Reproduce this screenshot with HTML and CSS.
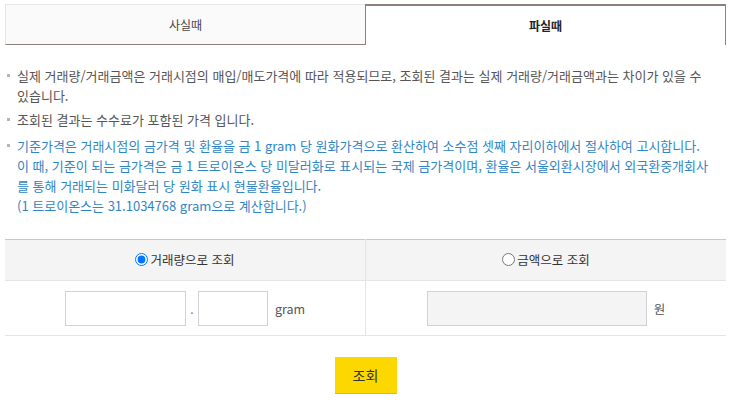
FILE: index.html
```html
<!DOCTYPE html>
<html lang="ko">
<head>
    <meta charset="UTF-8">
    <meta name="viewport" content="width=device-width, initial-scale=1.0">
    <title>골드 시세 조회</title>
    <link rel="stylesheet" href="styles.css">
</head>
<body>
    <div class="wrap">
        <ul class="tabs">
            <li class="tab">사실때</li>
            <li class="tab active">파실때</li>
        </ul>

        <ul class="notice">
            <li>실제 거래량/거래금액은 거래시점의 매입/매도가격에 따라 적용되므로, 조회된 결과는 실제 거래량/거래금액과는 차이가 있을 수 있습니다.</li>
            <li>조회된 결과는 수수료가 포함된 가격 입니다.</li>
            <li class="blue">기준가격은 거래시점의 금가격 및 환율을 금 1 gram 당 원화가격으로 환산하여 소수점 셋째 자리이하에서 절사하여 고시합니다.<br>이 때, 기준이 되는 금가격은 금 1 트로이온스 당 미달러화로 표시되는 국제 금가격이며, 환율은 서울외환시장에서 외국환중개회사를 통해 거래되는 미화달러 당 원화 표시 현물환율입니다.<br>(1 트로이온스는 31.1034768 gram으로 계산합니다.)</li>
        </ul>

        <table class="calc">
            <tr>
                <th><label><input type="radio" name="mode" checked>거래량으로 조회</label></th>
                <th><label><input type="radio" name="mode">금액으로 조회</label></th>
            </tr>
            <tr>
                <td>
                    <div class="field">
                        <input type="text" class="box int">
                        <span class="dot">.</span>
                        <input type="text" class="box dec">
                        <span class="unit">gram</span>
                    </div>
                </td>
                <td>
                    <div class="field">
                        <input type="text" class="box won" disabled>
                        <span class="unit">원</span>
                    </div>
                </td>
            </tr>
        </table>

        <div class="btn-area">
            <button class="btn-search">조회</button>
        </div>
    </div>
</body>
</html>
```

FILE: styles.css
```css
* {
    margin: 0;
    padding: 0;
    box-sizing: border-box;
}
body {
    font-family: "Noto Sans CJK KR", "Noto Sans", sans-serif;
    font-size: 12px;
    color: #555;
    background: #fff;
}
.wrap {
    margin: 4px 8px 0 5px;
}
.tabs {
    display: flex;
    list-style: none;
}
.tab {
    flex: 1;
    height: 41px;
    line-height: 39px;
    text-align: center;
    font-size: 12px;
    color: #444;
    background: #fafafa;
    border-top: 1px solid #e6e6e6;
    border-left: 1px solid #e6e6e6;
    border-bottom: 1px solid #8c8079;
}
.tab.active {
    color: #222;
    font-weight: bold;
    background: #fff;
    border-top: 2px solid #8c8079;
    border-left: 1px solid #8c8079;
    border-right: 1px solid #8c8079;
    border-bottom: none;
}
.notice {
    list-style: none;
    margin-top: 21px;
    padding-right: 14px;
    font-size: 13px;
    line-height: 20px;
}
.notice li {
    position: relative;
    padding-left: 12px;
    margin-bottom: 4px;
}
.notice li:before {
    content: "";
    position: absolute;
    left: 2px;
    top: 8px;
    width: 3px;
    height: 3px;
    background: #b5b5b5;
}
.notice li.blue {
    color: #2f86c4;
    margin-top: 6px;
}
.calc {
    width: 100%;
    margin-top: 23px;
    border-collapse: collapse;
    border-top: 1px solid #c8c8c8;
    table-layout: fixed;
}
.calc th {
    height: 41px;
    background: #f4f4f4;
    font-weight: normal;
    font-size: 12.5px;
    color: #333;
    border-bottom: 1px solid #e5e5e5;
}
.calc th + th,
.calc td + td {
    border-left: 1px solid #e5e5e5;
}
.calc th label {
    display: inline-flex;
    align-items: center;
}
.calc th input {
    width: 13px;
    height: 13px;
    margin: 0 2px 0 0;
}
.calc td {
    height: 55px;
    border-bottom: 1px solid #e5e5e5;
}
.field {
    display: flex;
    align-items: center;
    justify-content: center;
}
.box {
    height: 35px;
    border: 1px solid #d2d2d2;
    background: #fff;
}
.box.int {
    width: 121px;
}
.box.dec {
    width: 70px;
}
.box.won {
    width: 220px;
    background: #f4f4f4;
}
.dot {
    width: 12px;
    text-align: center;
    color: #777;
}
.unit {
    margin-left: 7px;
    font-size: 12.5px;
    color: #555;
}
.btn-area {
    margin-top: 21px;
    text-align: center;
}
.btn-search {
    width: 62px;
    height: 37px;
    background: #fcd700;
    border: none;
    border-bottom: 1px solid #f2b200;
    font-family: inherit;
    font-size: 14px;
    color: #333;
}
```
